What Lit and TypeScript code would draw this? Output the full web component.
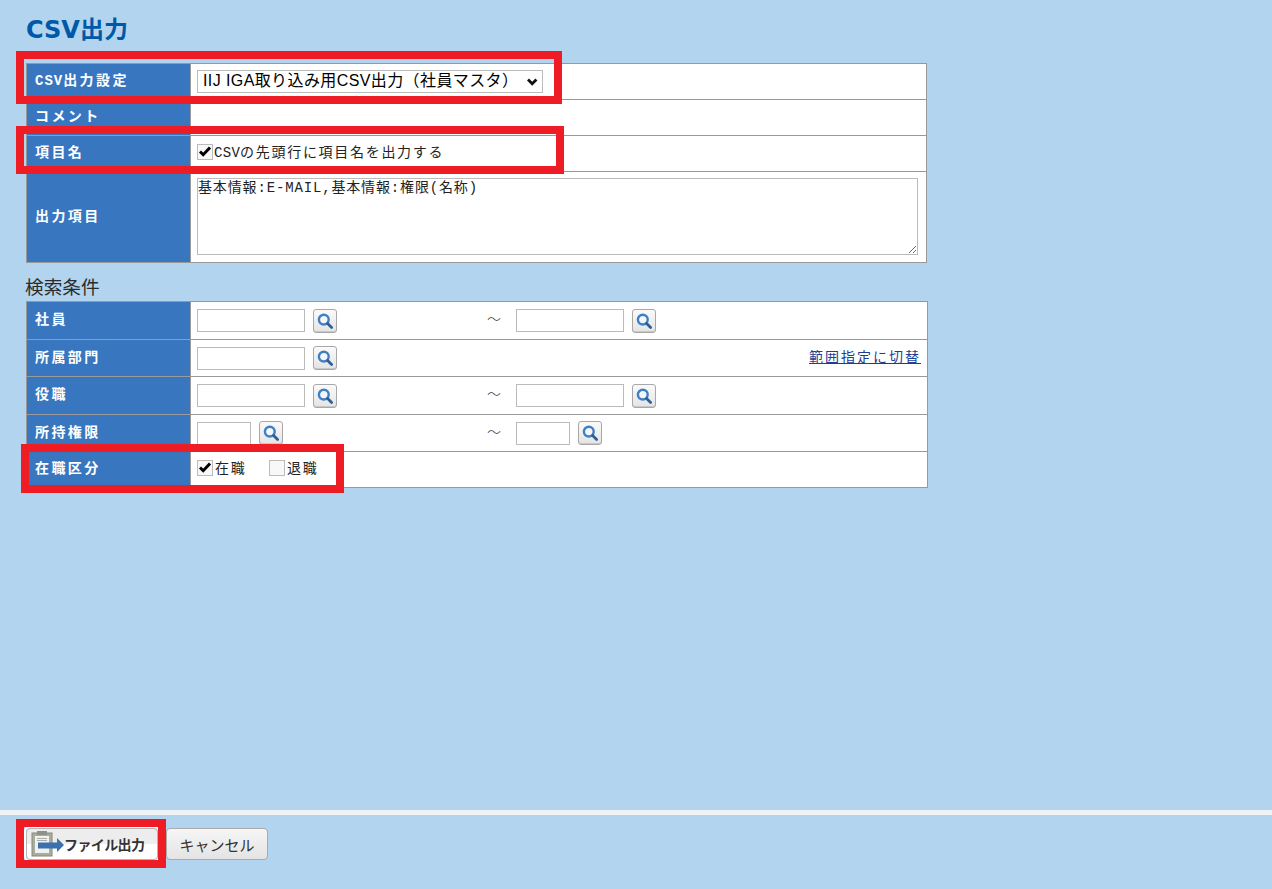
import { LitElement, html, css } from "lit";
import { customElement } from "lit/decorators.js";

const search = html`<span class="sb"><svg width="18" height="18" viewBox="0 0 18 18"><circle cx="7.8" cy="7.6" r="4.9" fill="#f3f7fb" stroke="#3f7fc4" stroke-width="2.4"/><path d="M11.6 11.4 15.6 15.4" stroke="#2f5f95" stroke-width="2.8" stroke-linecap="round"/></svg></span>`;
const cb = (on: boolean) => html`<span class="cb">${on ? html`<svg width="16" height="16" viewBox="0 0 16 16"><path d="M3 7.5 6.2 10.7 13 3.5" fill="none" stroke="#000" stroke-width="3"/></svg>` : ""}</span>`;

@customElement("app-root")
export class AppRoot extends LitElement {
  static styles = css`
    :host { display: flex; flex-direction: column; height: 889px; background: #b2d4ef; font-family: "Liberation Mono", "Noto Sans CJK JP", monospace; font-size: 14px; color: #222; overflow: hidden; position: relative; }
    h1 { margin: 0; padding: 15px 0 0 26px; height: 63px; box-sizing: border-box; font: bold 24px/30px "DejaVu Sans", "Noto Sans CJK JP", sans-serif; color: #0058a8; }
    .tb { display: grid; grid-template-columns: 164px 1fr; margin-left: 26px; border: 1px solid #999; background: #fff; box-sizing: border-box; }
    .t1 { width: 901px; grid-template-rows: 36px 36px 36px 90px; }
    .t2 { width: 902px; grid-template-rows: 38px 37px 38px 37px 35px; }
    .l { background: #3877bf; color: #fff; font-weight: bold; letter-spacing: 2.4px; padding: 0 0 5px 8px; display: flex; align-items: center; border-bottom: 1px solid #999; border-right: 1px solid #999; white-space: nowrap; }
    .c { display: flex; align-items: center; padding-left: 6px; border-bottom: 1px solid #999; min-width: 0; white-space: nowrap; }
    .last { border-bottom: 0; }
    .l .h { letter-spacing: 1px; }
    .sel { position: relative; display: flex; flex: none; }
    .sel svg { position: absolute; left: 330px; top: 8px; pointer-events: none; }
    select { appearance: none; width: 346px; height: 23px; font: 16px "Liberation Sans", "Noto Sans CJK JP", sans-serif; letter-spacing: .4px; color: #000; background: #fff; border: 1px solid #bbb; padding: 0 0 2px 5px; box-sizing: border-box; border-radius: 0; outline: none; }
    textarea { display: block; width: 721px; height: 77px; margin: 0; border: 1px solid #bbb; padding: 2px 1px 1px 0; box-sizing: border-box; font: 14px/14px "Liberation Mono", "Noto Sans CJK JP", monospace; letter-spacing: .85px; color: #222; border-radius: 0; outline: none; }
    .ta { padding-top: 6px; align-items: flex-start; }
    .cbt { letter-spacing: 1.7px; }
    .cbt .h { letter-spacing: .3px; }
    .tx { padding-bottom: 5px; }
    .cb { display: inline-flex; width: 16px; height: 16px; box-sizing: border-box; border: 1px solid #bbb; background: #f8f8f8; flex: none; margin: -4px 1px 0 0; overflow: visible; }
    .cb svg { flex: none; margin: -1px; }
    .on { width: 54px; flex: none; margin-left: 1px; }
    .off { margin-left: 1px; }
    .sec { margin: 11px 0 0 25px; height: 27px; font: 18.67px/24px "Noto Sans CJK JP", sans-serif; color: #2b2b2b; }
    input { width: 108px; height: 23px; box-sizing: border-box; border: 1px solid #bbb; background: #fff; padding: 0; margin: 0; border-radius: 0; outline: none; flex: none; }
    input.s { width: 54px; }
    .sb { width: 24px; height: 24px; box-sizing: border-box; margin-left: 8px; border: 1px solid #a8a8a8; border-radius: 3px; background: linear-gradient(#fafafa, #e4e4e4); box-shadow: inset 0 -1px #c8c8c8; display: inline-flex; align-items: center; justify-content: center; flex: none; }
    .gap { width: 150px; flex: none; }
    .gap.w { width: 204px; }
    .til { width: 29px; font-size: 14px; font-weight: 300; color: #333; flex: none; padding-bottom: 5px; }
    a { margin-left: auto; margin-right: 6px; color: #1c3f94; letter-spacing: 2px; text-decoration: underline; padding-bottom: 5px; }
    .grow { flex: 1; }
    .foot { border-top: 5px solid #f0f3f5; padding: 13px 0 0 26px; height: 79px; box-sizing: border-box; display: flex; gap: 8px; align-items: flex-start; }
    button { height: 32px; box-sizing: border-box; border: 1px solid #aaa; border-radius: 4px; background: linear-gradient(#f6f6f6, #e4e4e4); font: 15px "Noto Sans CJK JP", sans-serif; color: #333; padding: 0; display: flex; align-items: center; justify-content: center; }
    .out { width: 132px; font-weight: 700; font-size: 14px; letter-spacing: -.6px; background: linear-gradient(#ededed 50%, #fff 50%); border-color: #b5b5b5; box-shadow: 0 0 0 2px #fff; justify-content: flex-start; padding-left: 3px; }
    .can { width: 102px; }
    .red { position: absolute; border: 8px solid #ee1c25; box-sizing: border-box; pointer-events: none; }
    .r1 { left: 16px; top: 51px; width: 546px; height: 53px; }
    .r2 { left: 16px; top: 126px; width: 548px; height: 48px; }
    .r3 { left: 21px; top: 444px; width: 323px; height: 49px; }
    .r4 { left: 16px; top: 819px; width: 150px; height: 49px; }
  `;
  render() {
    return html`
      <h1>CSV出力</h1>
      <div class="tb t1">
        <div class="l"><span><span class="h">CSV</span>出力設定</span></div>
        <div class="c"><span class="sel"><select><option>IIJ IGA取り込み用CSV出力（社員マスタ）</option></select><svg width="12" height="8" viewBox="0 0 12 8"><path d="M1 1.5 5.2 5.8 9.4 1.5" fill="none" stroke="#111" stroke-width="2.8"/></svg></span></div>
        <div class="l">コメント</div><div class="c"></div>
        <div class="l">項目名</div>
        <div class="c cbt">${cb(true)}<span class="tx"><span class="h">CSV</span>の先頭行に項目名を出力する</span></div>
        <div class="l last">出力項目</div>
        <div class="c ta last"><textarea .value=${"基本情報:E-MAIL,基本情報:権限(名称)"}></textarea></div>
      </div>
      <div class="sec">検索条件</div>
      <div class="tb t2">
        <div class="l">社員</div>
        <div class="c"><input />${search}<span class="gap"></span><span class="til">～</span><input />${search}</div>
        <div class="l">所属部門</div>
        <div class="c"><input />${search}<a href="#">範囲指定に切替</a></div>
        <div class="l">役職</div>
        <div class="c"><input />${search}<span class="gap"></span><span class="til">～</span><input />${search}</div>
        <div class="l">所持権限</div>
        <div class="c"><input class="s" />${search}<span class="gap w"></span><span class="til">～</span><input class="s" />${search}</div>
        <div class="l last">在職区分</div>
        <div class="c cbt last">${cb(true)}<span class="on tx">在職</span>${cb(false)}<span class="off tx">退職</span></div>
      </div>
      <div class="grow"></div>
      <div class="foot">
        <button class="out"><svg width="34" height="26" viewBox="0 0 34 26"><rect x="2" y="2" width="20" height="23" fill="#a9ada0" stroke="#85887f"/><rect x="5" y="5" width="14" height="17" fill="#f1f2ec"/><rect x="7" y="0" width="10" height="4" fill="#8e918a"/><path d="M7 7.5h10M7 9.5h10" stroke="#aaa"/><path d="M8 11.5h19V7l7 7-7 7v-3.5H8z" fill="#3a70b0"/></svg><span>ファイル出力</span></button>
        <button class="can">キャンセル</button>
      </div>
      <div class="red r1"></div><div class="red r2"></div><div class="red r3"></div><div class="red r4"></div>
    `;
  }
}
